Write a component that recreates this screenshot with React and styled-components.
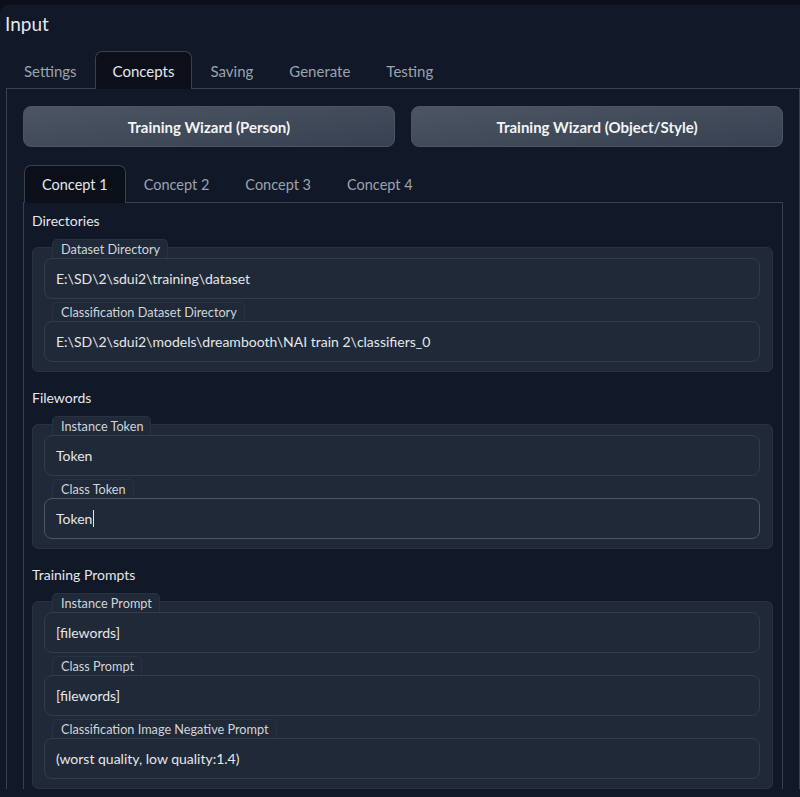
import styled, { createGlobalStyle } from "styled-components";

const GlobalStyle = createGlobalStyle`
  html, body {
    margin: 0;
    padding: 0;
    background: #0b0f19;
  }
  body {
    font-family: "Lato", "Noto Sans", sans-serif;
    color: #e5e7eb;
  }
  * {
    box-sizing: border-box;
  }
`;

const sections = [
  {
    title: "Directories",
    fields: [
      { label: "Dataset Directory", value: "E:\\SD\\2\\sdui2\\training\\dataset" },
      {
        label: "Classification Dataset Directory",
        value: "E:\\SD\\2\\sdui2\\models\\dreambooth\\NAI train 2\\classifiers_0",
      },
    ],
  },
  {
    title: "Filewords",
    fields: [
      { label: "Instance Token", value: "Token" },
      { label: "Class Token", value: "Token", focused: true },
    ],
  },
  {
    title: "Training Prompts",
    fields: [
      { label: "Instance Prompt", value: "[filewords]" },
      { label: "Class Prompt", value: "[filewords]" },
      { label: "Classification Image Negative Prompt", value: "(worst quality, low quality:1.4)" },
    ],
  },
];

export default function App() {
  return (
    <>
      <GlobalStyle />
      <Page>
        <Panel>
          <Title>Input</Title>
          <TabBar>
            <Tab>Settings</Tab>
            <Tab $active>Concepts</Tab>
            <Tab>Saving</Tab>
            <Tab>Generate</Tab>
            <Tab>Testing</Tab>
          </TabBar>
          <TabPanel>
            <ButtonRow>
              <WizardButton>Training Wizard (Person)</WizardButton>
              <WizardButton>Training Wizard (Object/Style)</WizardButton>
            </ButtonRow>
            <ConceptTabs>
              <Tab $active $small>Concept 1</Tab>
              <Tab $small>Concept 2</Tab>
              <Tab $small>Concept 3</Tab>
              <Tab $small>Concept 4</Tab>
            </ConceptTabs>
            <ConceptPanel>
              {sections.map((section) => (
                <Section key={section.title}>
                  <SectionTitle>{section.title}</SectionTitle>
                  <Group>
                    {section.fields.map((field) => (
                      <Field key={field.label}>
                        <Chip>{field.label}</Chip>
                        <TextInput $focused={field.focused}>
                          {field.value}
                          {field.focused && <Caret />}
                        </TextInput>
                      </Field>
                    ))}
                  </Group>
                </Section>
              ))}
            </ConceptPanel>
          </TabPanel>
        </Panel>
      </Page>
    </>
  );
}

const Page = styled.div`
  padding-top: 5px;
  height: 797px;
  overflow: hidden;
`;

const Panel = styled.div`
  background: #111827;
  border-radius: 8px 0 0 0;
  min-height: 792px;
  padding-top: 6px;
`;

const Title = styled.div`
  font-size: 19px;
  line-height: 25px;
  padding-left: 5px;
  color: #e5e7eb;
`;

const TabBar = styled.div`
  display: flex;
  margin-top: 15px;
  padding-left: 6px;
  position: relative;
  z-index: 1;
`;

const Tab = styled.div`
  height: 38px;
  padding: 0 17px;
  display: flex;
  align-items: center;
  font-size: ${(p) => (p.$small ? "14.5px" : "15px")};
  color: ${(p) => (p.$active ? "#e5e7eb" : "#9ca3af")};
  background: ${(p) => (p.$active ? "#0b0f19" : "transparent")};
  border: 1px solid ${(p) => (p.$active ? "#374151" : "transparent")};
  border-bottom: none;
  border-radius: 7px 7px 0 0;
  margin-bottom: -1px;
`;

const TabPanel = styled.div`
  margin-left: 6px;
  border: 1px solid #374151;
  border-bottom: none;
  padding: 17px 16px 0 16px;
`;

const ButtonRow = styled.div`
  display: grid;
  grid-template-columns: 1fr 1fr;
  gap: 16px;
`;

const WizardButton = styled.button`
  height: 41px;
  border: 1px solid #4b5563;
  border-radius: 8px;
  background: linear-gradient(to bottom right, #4b5563, #374151);
  color: #f3f4f6;
  font-family: "Lato", "Noto Sans", sans-serif;
  font-size: 15px;
  font-weight: 700;
  cursor: pointer;
`;

const ConceptTabs = styled.div`
  display: flex;
  margin-top: 18px;
  padding-left: 1px;
  position: relative;
  z-index: 1;
`;

const ConceptPanel = styled.div`
  border: 1px solid #374151;
  border-bottom: none;
  padding: 8px 9px 0 8px;
  display: flex;
  flex-direction: column;
  gap: 16px;
`;

const Section = styled.div`
  display: flex;
  flex-direction: column;
`;

const SectionTitle = styled.div`
  font-size: 14px;
  line-height: 20px;
  color: #e5e7eb;
  margin-bottom: 16px;
`;

const Group = styled.div`
  background: #1f2937;
  border: 1px solid #283242;
  border-radius: 6px;
  padding: 0 12px 9px 11px;
  display: flex;
  flex-direction: column;
  gap: 3px;
`;

const Field = styled.div`
  display: flex;
  flex-direction: column;
  align-items: flex-start;

  &:first-child {
    margin-top: -9px;
  }
`;

const Chip = styled.div`
  margin-left: 8px;
  height: 19px;
  padding: 0 7px 0 8px;
  display: flex;
  align-items: center;
  font-size: 12.7px;
  color: #d1d5db;
  background: #1f2937;
  border: 1px solid #283242;
  border-bottom: none;
  border-radius: 5px 5px 0 0;
`;

const TextInput = styled.div`
  align-self: stretch;
  height: 41px;
  display: flex;
  align-items: center;
  padding-left: 11px;
  font-size: 14px;
  color: #e5e7eb;
  background: #1f2937;
  border: 1px solid ${(p) => (p.$focused ? "#4b5563" : "#323c4c")};
  border-radius: 8px;
`;

const Caret = styled.span`
  display: inline-block;
  width: 1px;
  height: 17px;
  background: #e5e7eb;
  margin-left: 1px;
`;
